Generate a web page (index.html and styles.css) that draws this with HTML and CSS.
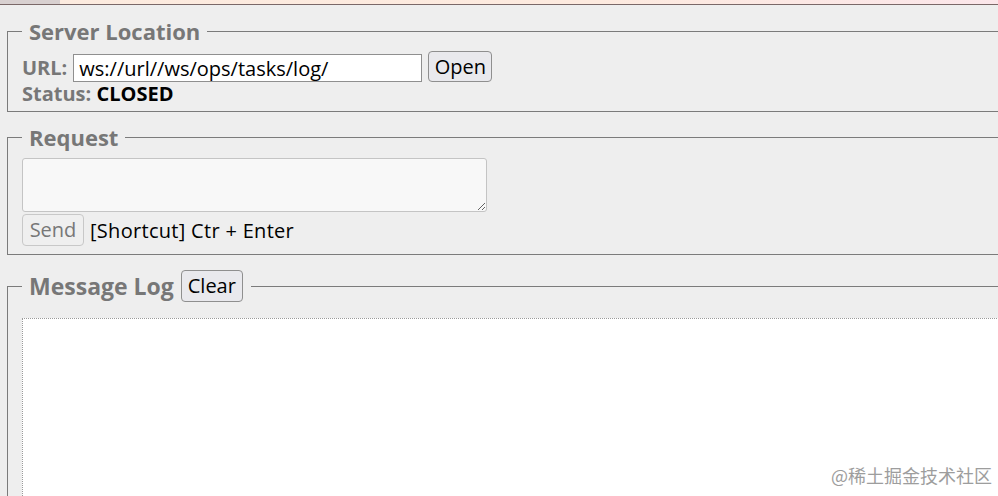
FILE: index.html
```
<!DOCTYPE html>
<html lang="en">
<head>
<meta charset="utf-8">
<title>WebSocket Client</title>
<link rel="stylesheet" href="styles.css">
</head>
<body>
<div class="topbar"><div class="tab"></div></div>
<main class="page">
  <fieldset class="box box-server">
    <legend class="legend">Server Location</legend>
    <div class="row">
      <span class="label">URL:</span>
      <input class="url" type="text" value="ws://url//ws/ops/tasks/log/">
      <button class="btn btn-open">Open</button>
    </div>
    <div class="status"><span class="label">Status:</span> <span class="state">CLOSED</span></div>
  </fieldset>

  <fieldset class="box box-request">
    <legend class="legend">Request</legend>
    <textarea class="req" disabled></textarea>
    <div class="row row-send">
      <button class="btn btn-disabled" disabled>Send</button>
      <span class="hint">[Shortcut] Ctr + Enter</span>
    </div>
  </fieldset>

  <fieldset class="box box-log">
    <legend class="legend legend-log">Message Log <button class="btn btn-clear">Clear</button></legend>
    <div class="log"></div>
  </fieldset>
</main>
<div class="watermark">@稀土掘金技术社区</div>
</body>
</html>
```
FILE: styles.css
```
* { box-sizing: border-box; }
html, body { height: 100%; }
body {
  margin: 0;
  background: #eeeeee;
  font-family: "Open Sans", "Noto Sans", sans-serif;
  font-size: 20px;
  color: #000;
  overflow: hidden;
  position: relative;
}
.topbar {
  height: 5px;
  background: linear-gradient(90deg, #fcebdf 0%, #fdeadf 60%, #fbe6ea 100%);
  border-bottom: 1px solid #7a6868;
  display: flex;
}
.tab { width: 60px; background: #d8d0d0; }
.page {
  padding: 0 0 0 7px;
  margin-right: -20px;
}
.box {
  margin: 0;
  border: 1px solid #7b7b7b;
  padding: 0 14px 0 14px;
  min-width: 0;
}
.box-server { margin-top: 13px; padding-bottom: 5px; }
.box-request { margin-top: 12px; padding-bottom: 8px; }
.box-log { margin-top: 15px; height: 300px; }
.legend {
  padding: 0 7px;
  font-size: 22px;
  font-weight: 700;
  color: #777;
  line-height: 26px;
  height: 26px;
}
.legend-log {
  display: flex;
  align-items: center;
  gap: 7px;
  height: 32px;
  padding-right: 8px;
  font-size: 23px;
}
.row { display: flex; align-items: flex-end; gap: 6px; margin-top: 7px; }
.label { font-weight: 700; color: #777; }
.row .label { align-self: center; margin-top: 1px; }
.url {
  width: 349px;
  height: 28px;
  border: 1px solid #8f8f8f;
  border-radius: 0;
  background: #fff;
  font: inherit;
  padding: 0 5px;
  color: #000;
}
.btn {
  font-family: inherit;
  font-size: 20px;
  font-weight: 400;
  letter-spacing: 0;
  height: 31px;
  padding: 0;
  border: 1px solid #8f8f8f;
  border-radius: 4px;
  background: #e9e9ed;
  color: #000;
  line-height: 1;
}
.btn-open { width: 64px; }
.status { line-height: 24px; }
.state { font-weight: 700; color: #000; }
.req {
  display: block;
  width: 465px;
  height: 54px;
  margin-top: 8px;
  border: 1px solid #c4c4c4;
  border-radius: 3px;
  background: #f8f8f8;
  resize: both;
}
.row-send { margin-top: 2px; align-items: center; }
.btn-disabled { color: #777; border-color: #c8c8c8; background: #efefef; width: 62px; height: 32px; }
.hint { color: #000; letter-spacing: 0.3px; }
.btn-clear { width: 62px; height: 32px; }
.log {
  margin-top: 16px;
  height: 220px;
  background: #fff;
  border: 1px dotted #9a9a9a;
}
.watermark {
  position: absolute;
  right: 6px;
  bottom: 8px;
  font-family: "Noto Sans CJK SC", sans-serif;
  font-size: 18px;
  color: #9d9d9d;
}
```
